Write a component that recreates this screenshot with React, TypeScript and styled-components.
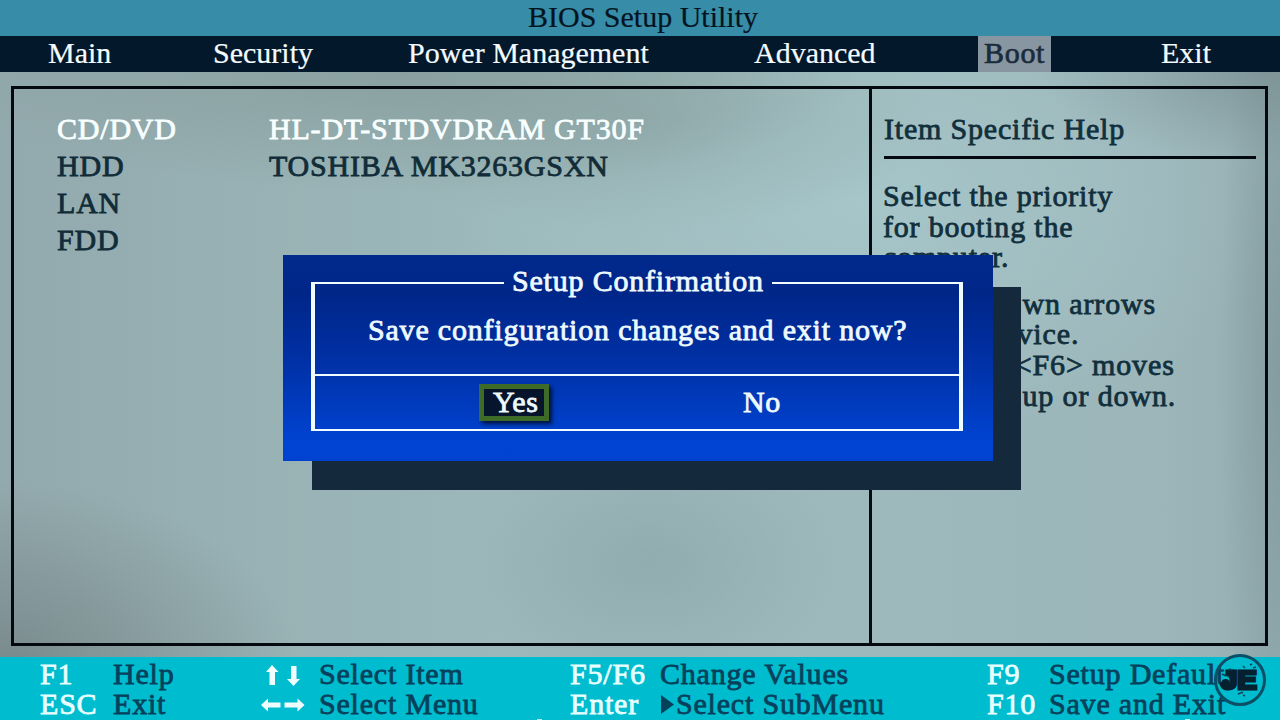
import React from "react";
import styled, { createGlobalStyle, css } from "styled-components";

const GlobalStyle = createGlobalStyle`
  body {
    margin: 0;
    overflow: hidden;
    font-family: "Liberation Serif", "Times New Roman", serif;
    font-size: 30px;
  }
`;

const thick = css`
  letter-spacing: 0.8px;
  -webkit-text-stroke: 0.8px currentColor;
`;

const Screen = styled.div`
  position: relative;
  display: flex;
  flex-direction: column;
  width: 1280px;
  height: 720px;
  overflow: hidden;
  white-space: pre;
`;

const TitleBar = styled.header`
  height: 36px;
  background: #378ca8;
  color: #04141f;
  line-height: 34px;
  padding-left: 528px;
  -webkit-text-stroke: 0.2px currentColor;
`;

const MenuBar = styled.nav`
  display: grid;
  grid-template-columns: 165px 195px 346px 224px 183px 1fr;
  justify-items: start;
  height: 36px;
  padding-left: 48px;
  background: #03182a;
  line-height: 34px;
  -webkit-text-stroke: 0.2px currentColor;
`;

const MenuItem = styled.span<{ $active?: boolean }>`
  height: 36px;
  color: ${(p) => (p.$active ? "#1a2c3c" : "#f4fbff")};
  ${(p) =>
    p.$active &&
    css`
      box-sizing: border-box;
      width: 73px;
      padding: 0 6px;
      background: #8796a1;
      letter-spacing: 0.7px;
      -webkit-text-stroke: 0.7px currentColor;
    `}
`;

const Body = styled.main`
  flex: 1;
  display: flex;
  padding: 14px 12px 11px 11px;
  background:
    radial-gradient(ellipse 190px 130px at 650px 490px, rgba(125, 150, 154, 0.35), transparent),
    radial-gradient(ellipse 460px 120px at 400px 0px, rgba(122, 140, 138, 0.5), transparent),
    radial-gradient(ellipse 300px 110px at 640px 50px, rgba(125, 145, 145, 0.35), transparent),
    radial-gradient(ellipse 220px 90px at 1260px 0px, rgba(105, 125, 128, 0.45), transparent),
    radial-gradient(ellipse 300px 190px at 0px 600px, rgba(95, 105, 106, 0.5), transparent),
    radial-gradient(ellipse 60px 500px at 1280px 300px, rgba(115, 138, 142, 0.5), transparent),
    radial-gradient(ellipse 420px 240px at 860px 130px, rgba(170, 203, 206, 0.7), transparent),
    linear-gradient(90deg, #92a9ad 0, #97b0b3 200px, #9cb8ba 500px, #9db9bc 900px, #9cb6ba 1150px, #95aeb2 100%);
`;

const Frame = styled.div`
  flex: 1;
  display: flex;
  border: 3px solid #03090f;
`;

const DeviceList = styled.div`
  width: 855px;
  padding: 22px 0 0 43px;
  box-sizing: border-box;
`;

const DeviceRow = styled.div<{ $selected?: boolean }>`
  ${thick}
  display: grid;
  grid-template-columns: 212px 1fr;
  height: 37px;
  line-height: 36px;
  color: ${(p) => (p.$selected ? "#f8ffff" : "#112c38")};
`;

const HelpPanel = styled.aside`
  ${thick}
  flex: 1;
  padding: 23px 9px 0 11px;
  border-left: 3px solid #03090f;
  color: #112f3c;
`;

const HelpTitle = styled.h2`
  margin: 0 0 22px 1px;
  height: 44px;
  border-bottom: 3px solid #03090f;
  font-size: 30px;
  font-weight: normal;
  line-height: 34px;
`;

const HelpText = styled.p<{ $tracking?: number }>`
  margin: 0 0 16px;
  line-height: 30.6px;
  letter-spacing: ${(p) => p.$tracking ?? 0.8}px;
`;

const Dialog = styled.section`
  position: absolute;
  left: 283px;
  top: 255px;
  width: 710px;
  height: 206px;
  box-sizing: border-box;
  padding: 27px 30px 30px 28px;
  background: linear-gradient(#002a8c 0%, #002688 18%, #0030a4 50%, #003cc0 75%, #0044d4 92%, #0042d0 100%);
  color: #eefaff;
  ${thick}
`;

const DialogShadow = styled.div`
  position: absolute;
  left: 312px;
  top: 287px;
  width: 709px;
  height: 203px;
  background: #14293c;
`;

const DialogFrame = styled.div`
  display: flex;
  flex-direction: column;
  height: 149px;
  box-sizing: border-box;
  border: solid #f0fcff;
  border-width: 0 4px 2px;
`;

const Legend = styled.div`
  display: flex;
  align-items: center;
  height: 2px;
  gap: 8px;
  line-height: 22px;
`;

const Rule = styled.i<{ $width?: number }>`
  height: 2px;
  background: #f0fcff;
  ${(p) => (p.$width ? `flex: 0 0 ${p.$width}px;` : "flex: 1;")}
`;

const LegendText = styled.span`
  margin-bottom: 5px;
`;

const Question = styled.div`
  height: 90px;
  padding-left: 53px;
  border-bottom: 2px solid #f0fcff;
  line-height: 92px;
`;

const Choices = styled.div`
  display: grid;
  grid-template-columns: 250px 1fr;
  flex: 1;
  padding: 8px 0 0 164px;
`;

const Choice = styled.button<{ $selected?: boolean }>`
  justify-self: start;
  height: 37px;
  width: 70px;
  box-sizing: border-box;
  padding: 0 0 0 9px;
  border: 5px solid ${(p) => (p.$selected ? "#3f6b28" : "transparent")};
  background: ${(p) => (p.$selected ? "#06152b" : "transparent")};
  box-shadow: ${(p) => (p.$selected ? "3px 3px 4px rgba(0, 10, 40, 0.85)" : "none")};
  color: inherit;
  font: inherit;
  letter-spacing: 0.6px;
  line-height: 26px;
  text-align: left;
  -webkit-text-stroke: inherit;
`;

const ChoiceLabel = styled.span`
  display: block;
  height: 27px;
`;

const Footer = styled.footer`
  ${thick}
  display: grid;
  grid-template-columns: 73px 147px 59px 251px 90px 327px 62px 1fr;
  grid-auto-rows: 30px;
  align-content: start;
  height: 61px;
  padding: 2px 0 0 40px;
  background: #00bccf;
  line-height: 30px;
`;

const Key = styled.span`
  color: #e8ffff;
`;

const Action = styled.span`
  display: flex;
  align-items: center;
  color: #06415c;
`;

const Arrows = styled.svg`
  width: 46px;
  height: 30px;
  fill: #effdff;
`;

const SubMenuMark = styled.svg`
  width: 13px;
  height: 19px;
  margin: 0 2px 0 1px;
  fill: #06415c;
`;

const Speck = styled.i<{ $x: number }>`
  position: absolute;
  left: ${(p) => p.$x}px;
  top: 719px;
  width: 5px;
  height: 1px;
  background: #b8eef4;
`;

const Badge = styled.svg`
  position: absolute;
  left: 1212px;
  top: 652px;
  width: 56px;
  height: 56px;
`;

export default function App() {
  return (
    <Screen>
      <GlobalStyle />
      <TitleBar>BIOS Setup Utility</TitleBar>
      <MenuBar>
        <MenuItem>Main</MenuItem>
        <MenuItem>Security</MenuItem>
        <MenuItem>Power Management</MenuItem>
        <MenuItem>Advanced</MenuItem>
        <MenuItem $active>Boot</MenuItem>
        <MenuItem>Exit</MenuItem>
      </MenuBar>

      <Body>
        <Frame>
          <DeviceList>
            <DeviceRow $selected>
              <span>CD/DVD</span>
              <span>HL-DT-STDVDRAM GT30F</span>
            </DeviceRow>
            <DeviceRow>
              <span>HDD</span>
              <span>TOSHIBA MK3263GSXN</span>
            </DeviceRow>
            <DeviceRow>
              <span>LAN</span>
            </DeviceRow>
            <DeviceRow>
              <span>FDD</span>
            </DeviceRow>
          </DeviceList>
          <HelpPanel>
            <HelpTitle>Item Specific Help</HelpTitle>
            <HelpText>{"Select the priority\nfor booting the\ncomputer."}</HelpText>
            <HelpText $tracking={0.87}>
              {"Up and Down arrows\nselect a device.\n<F5> and <F6> moves\nthe device up or down."}
            </HelpText>
          </HelpPanel>
        </Frame>
      </Body>

      <Footer>
        <Key>F1</Key>
        <Action>Help</Action>
        <Arrows viewBox="0 0 46 30">
          <path d="M12 6 L18.500 13 H15 V26 H9.500 V13 H6 Z" />
          <path d="M33.500 27 L40 20 H36.500 V7 H31 V20 H27 Z" />
        </Arrows>
        <Action>Select Item</Action>
        <Key>F5/F6</Key>
        <Action>Change Values</Action>
        <Key>F9</Key>
        <Action>Setup Defaults</Action>

        <Key>ESC</Key>
        <Action>Exit</Action>
        <Arrows viewBox="0 0 46 30">
          <path d="M1 16 L8 9.500 V13.500 H20.500 V18.500 H8 V22.500 Z" />
          <path d="M44.500 16 L37.500 9.500 V13.500 H24.500 V18.500 H37.500 V22.500 Z" />
        </Arrows>
        <Action>Select Menu</Action>
        <Key>Enter</Key>
        <Action>
          <SubMenuMark viewBox="0 0 13 19">
            <path d="M0 0 L13 9.500 L0 19 Z" />
          </SubMenuMark>
          Select SubMenu
        </Action>
        <Key>F10</Key>
        <Action>Save and Exit</Action>
      </Footer>
      <Speck $x={537} />
      <Speck $x={1185} />

      <DialogShadow />
      <Dialog>
        <DialogFrame>
          <Legend>
            <Rule $width={189} />
            <LegendText>Setup Confirmation</LegendText>
            <Rule />
          </Legend>
          <Question>Save configuration changes and exit now?</Question>
          <Choices>
            <Choice $selected>
              <ChoiceLabel>Yes</ChoiceLabel>
            </Choice>
            <Choice>
              <ChoiceLabel>No</ChoiceLabel>
            </Choice>
          </Choices>
        </DialogFrame>
      </Dialog>

      <Badge viewBox="0 0 56 56">
        <circle cx="28" cy="28" r="24.500" fill="none" stroke="#0b4f66" strokeWidth="3" />
        <text
          x="9"
          y="37"
          textLength="36"
          lengthAdjust="spacingAndGlyphs"
          fontFamily="Liberation Sans, Arial, sans-serif"
          fontWeight="bold"
          fontSize="26"
          fill="#05202f"
          stroke="#05202f"
          strokeWidth="3"
        >
          JE
        </text>
        <circle cx="13.500" cy="31" r="4" fill="#05202f" />
        <path
          d="M10 22 l4 2 M17 17 l3 1 M31 14 l2 2 M38 13 l2 -1 M41 16 l3 -1 M26 42 l3 -1 M31 43 l2 1 M29 40 l2 1"
          stroke="#0b4258"
          strokeWidth="1.500"
        />
      </Badge>
    </Screen>
  );
}
